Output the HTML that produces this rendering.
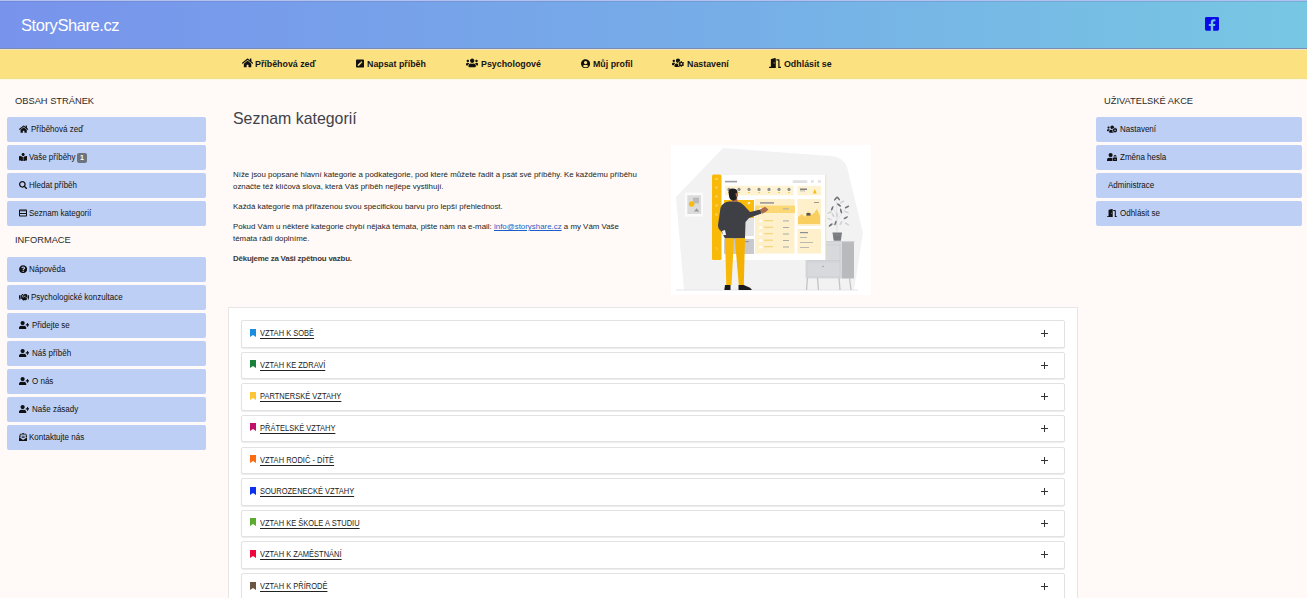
<!DOCTYPE html>
<html lang="cs">
<head>
<meta charset="utf-8">
<title>StoryShare.cz</title>
<style>
*{box-sizing:border-box;margin:0;padding:0}
html,body{width:1307px;height:598px;overflow:hidden}
body{background:#fffaf7;font-family:"Liberation Sans",sans-serif;color:#212529;position:relative}
.a{position:absolute;white-space:nowrap}
.abs{position:absolute}
.ic{position:absolute;display:block}
.nt{position:absolute;font-size:9.9px;font-weight:700;color:#151515;white-space:nowrap;line-height:12px;transform:scaleX(.895);transform-origin:0 0}
.sh{position:absolute;font-size:9.8px;color:#2a2a2a;white-space:nowrap;line-height:12px;transform:scaleX(.949);transform-origin:0 0}
.btn{position:absolute;height:25px;background:#bdcff5;border-radius:2px}
.bt{position:absolute;font-size:8.3px;line-height:11px;color:#111;white-space:nowrap;transform:scaleX(.964);transform-origin:0 0}
.badge{position:absolute;background:#6c757d;color:#fff;font-size:7px;font-weight:700;width:10px;height:10px;line-height:10px;text-align:center;border-radius:2px}
.p{position:absolute;left:233px;font-size:7.9px;line-height:12px;color:#222;white-space:nowrap}
.it{position:absolute;left:241px;width:824px;height:27.6px;background:#fff;border:1px solid #e2e2e2;border-radius:2px;box-shadow:0 1px 1px rgba(0,0,0,.08)}
.ct{position:absolute;font-size:8.3px;line-height:10px;color:#222;text-decoration:underline;text-underline-offset:1.6px;white-space:nowrap;transform:scaleX(.905);transform-origin:0 0}
.pl{position:absolute;width:7px;height:7px}
.pl:before{content:"";position:absolute;left:0;top:3px;width:7px;height:1px;background:#333}
.pl:after{content:"";position:absolute;left:3px;top:0;width:1px;height:7px;background:#333}
</style>
</head>
<body>
<div class="a" style="left:0;top:0;width:1307px;height:48px;background:linear-gradient(90deg,#7893ec 0%,#76abe8 50%,#77c7e3 100%)"></div>
<div class="a" style="left:0;top:0px;width:1307px;height:1px;background:#b2c1ef"></div>
<div class="a" style="left:0;top:1px;width:1307px;height:1px;background:rgba(100,110,170,.25)"></div>
<div class="a" style="left:0;top:48px;width:1307px;height:1px;background:#7c8ab2"></div>
<div class="a" style="left:0;top:49px;width:1307px;height:1px;background:#f0e8c3"></div>
<div class="a" style="left:0;top:78px;width:1307px;height:1px;background:#f2dc8e"></div>
<div class="a" style="left:0;top:79px;width:1307px;height:1px;background:#fffbe3"></div>
<div class="a" style="left:0;top:50px;width:1307px;height:28px;background:#fce181"></div>
<div class="a" style="left:21px;top:16px;font-size:16.5px;line-height:19px;color:#fff;letter-spacing:-0.42px">StoryShare.cz</div>
<svg class="ic" style="left:1205px;top:17px" width="14" height="13.8" viewBox="0 32 448 448" preserveAspectRatio="none"><path d="M400 32H48A48 48 0 0 0 0 80v352a48 48 0 0 0 48 48h137.25V327.69h-63V256h63v-54.64c0-62.15 37-96.48 93.67-96.48 27.14 0 55.52 4.84 55.52 4.84v61h-31.27c-30.81 0-40.42 19.12-40.42 38.73V256h68.78l-11 71.69h-57.78V480H400a48 48 0 0 0 48-48V80a48 48 0 0 0-48-48z" fill="#0a0ae8"/></svg>
<svg class="ic" style="left:242px;top:57.9px" width="11.14" height="9.90" viewBox="0 0 576 512" preserveAspectRatio="none"><path d="M280.37 148.26L96 300.11V464a16 16 0 0 0 16 16l112.06-.29a16 16 0 0 0 15.92-16V368a16 16 0 0 1 16-16h64a16 16 0 0 1 16 16v95.64a16 16 0 0 0 16 16.05L464 480a16 16 0 0 0 16-16V300L295.67 148.26a12.19 12.19 0 0 0-15.3 0zM571.6 251.47L488 182.56V44.05a12 12 0 0 0-12-12h-56a12 12 0 0 0-12 12v72.610L318.47 43a48 48 0 0 0-61 0L4.34 251.47a12 12 0 0 0-1.6 16.9l25.5 31A12 12 0 0 0 45.150 301l235.22-193.74a12.19 12.19 0 0 1 15.3 0L530.9 301a12 12 0 0 0 16.9-1.6l25.5-31a12 12 0 0 0-1.7-16.93z" fill="#111"/></svg>
<div class="nt" style="left:254.5px;top:58px">Příběhová zeď</div>
<svg class="ic" style="left:356px;top:58.7px" width="8.05" height="9.20" viewBox="0 0 448 512" preserveAspectRatio="none"><path d="M400 480H48c-26.5 0-48-21.5-48-48V80c0-26.5 21.5-48 48-48h352c26.5 0 48 21.5 48 48v352c0 26.5-21.5 48-48 48zM238.1 177.9L102.4 313.6l-6.3 57.1c-.8 7.6 5.6 14.1 13.3 13.3l57.1-6.3L302.2 242c2.3-2.3 2.3-6.1 0-8.5L246.7 178c-2.5-2.4-6.3-2.4-8.6-.1zM345 165.1L314.9 135c-9.4-9.4-24.6-9.4-33.9 0l-23.1 23.1c-2.3 2.3-2.3 6.1 0 8.5l55.5 55.5c2.3 2.3 6.1 2.3 8.5 0L345 199c9.3-9.3 9.3-24.5 0-33.9z" fill="#111"/></svg>
<div class="nt" style="left:366.5px;top:58px">Napsat příběh</div>
<svg class="ic" style="left:466px;top:57.9px" width="12.38" height="9.90" viewBox="0 0 640 512" preserveAspectRatio="none"><path d="M96 224c35.3 0 64-28.7 64-64s-28.7-64-64-64-64 28.7-64 64 28.7 64 64 64zm448 0c35.3 0 64-28.7 64-64s-28.7-64-64-64-64 28.7-64 64 28.7 64 64 64zm32 32h-64c-17.6 0-33.5 7.1-45.1 18.6 40.3 22.1 68.9 62 75.1 109.4h66c17.7 0 32-14.3 32-32v-32c0-35.3-28.7-64-64-64zm-256 0c61.9 0 112-50.1 112-112S381.9 32 320 32 208 82.1 208 144s50.1 112 112 112zm76.8 32h-8.3c-20.8 10-43.9 16-68.5 16s-47.6-6-68.5-16h-8.3C179.6 288 128 339.6 128 403.2V432c0 26.5 21.5 48 48 48h288c26.5 0 48-21.5 48-48v-28.8c0-63.6-51.6-115.2-115.2-115.2zm-223.7-13.4C161.5 263.1 145.6 256 128 256H64c-35.3 0-64 28.7-64 64v32c0 17.7 14.3 32 32 32h65.9c6.3-47.4 34.9-87.3 75.2-109.4z" fill="#111"/></svg>
<div class="nt" style="left:480.5px;top:58px">Psychologové</div>
<svg class="ic" style="left:580.6px;top:58.5px" width="9.20" height="9.50" viewBox="0 0 496 512" preserveAspectRatio="none"><path d="M248 8C111 8 0 119 0 256s111 248 248 248 248-111 248-248S385 8 248 8zm0 96c48.6 0 88 39.4 88 88s-39.4 88-88 88-88-39.4-88-88 39.4-88 88-88zm0 344c-58.7 0-111.3-26.6-146.5-68.2 18.8-35.4 55.6-59.8 98.5-59.8 2.4 0 4.8.4 7.1 1.1 13 4.2 26.6 6.9 40.9 6.9 14.3 0 28-2.7 40.9-6.9 2.3-.7 4.7-1.1 7.1-1.1 42.9 0 79.7 24.4 98.5 59.8C359.3 421.4 306.7 448 248 448z" fill="#111"/></svg>
<div class="nt" style="left:592.5px;top:58px">Můj profil</div>
<svg class="ic" style="left:672px;top:58.2px" width="12.00" height="9.60" viewBox="0 0 640 512" preserveAspectRatio="none"><path d="M610.5 341.3c2.6-14.1 2.6-28.5 0-42.6l25.8-14.9c3-1.7 4.3-5.2 3.3-8.5-6.7-21.6-18.2-41.2-33.2-57.4-2.3-2.5-6-3.1-9-1.4l-25.8 14.9c-10.9-9.3-23.4-16.5-36.9-21.3v-29.8c0-3.4-2.4-6.4-5.7-7.1-22.3-5-45-4.8-66.2 0-3.3.7-5.7 3.7-5.7 7.1v29.8c-13.5 4.8-26 12-36.9 21.3l-25.8-14.9c-2.9-1.7-6.7-1.1-9 1.4-15 16.2-26.5 35.8-33.2 57.4-1 3.3.4 6.8 3.3 8.5l25.8 14.9c-2.6 14.1-2.6 28.5 0 42.6l-25.8 14.9c-3 1.7-4.3 5.2-3.3 8.5 6.7 21.6 18.2 41.1 33.2 57.4 2.3 2.5 6 3.1 9 1.4l25.8-14.9c10.9 9.3 23.4 16.5 36.9 21.3v29.8c0 3.4 2.4 6.4 5.7 7.1 22.3 5 45 4.8 66.2 0 3.3-.7 5.7-3.7 5.7-7.1v-29.8c13.5-4.8 26-12 36.9-21.3l25.8 14.9c2.9 1.7 6.7 1.1 9-1.4 15-16.2 26.5-35.8 33.2-57.4 1-3.3-.4-6.8-3.3-8.5l-25.8-14.9zM496 368.5c-26.8 0-48.5-21.8-48.5-48.5s21.8-48.5 48.5-48.5 48.5 21.8 48.5 48.5-21.7 48.5-48.5 48.5zM96 224c35.3 0 64-28.7 64-64s-28.7-64-64-64-64 28.7-64 64 28.7 64 64 64zm224 32c1.9 0 3.7-.5 5.6-.6 8.3-21.7 20.5-42.1 36.3-59.2 7.4-8 17.9-12.6 28.9-12.6 6.9 0 13.7 1.8 19.6 5.3l7.9 4.6c.8-.5 1.6-.9 2.4-1.4 7-14.6 11.2-30.8 11.2-48 0-61.9-50.1-112-112-112S208 82.1 208 144c0 61.9 50.1 112 112 112zm105.2 194.5c-2.3-1.2-4.6-2.6-6.8-3.9-8.2 4.8-15.3 9.8-27.5 9.8-10.9 0-21.4-4.6-28.9-12.6-18.3-19.8-32.3-43.9-40.2-69.6-10.7-34.5 24.9-49.7 25.8-50.3-.1-2.6-.1-5.2 0-7.8l-7.9-4.6c-3.8-2.2-7-5-9.8-8.1-3.3.2-6.5.6-9.8.6-24.6 0-47.6-6-68.5-16h-8.3C179.6 288 128 339.6 128 403.2V432c0 26.5 21.5 48 48 48h255.4c-3.7-6-6.2-12.8-6.2-20.3v-9.2zM173.1 274.6C161.5 263.1 145.6 256 128 256H64c-35.3 0-64 28.7-64 64v32c0 17.7 14.3 32 32 32h65.9c6.3-47.4 34.9-87.3 75.2-109.4z" fill="#111"/></svg>
<div class="nt" style="left:686.8px;top:58px">Nastavení</div>
<svg class="ic" style="left:769px;top:58px" width="12.38" height="9.90" viewBox="0 0 640 512" preserveAspectRatio="none"><path d="M624 448h-80V113.45C544 86.19 522.47 64 496 64H384v64h96v384h144c8.84 0 16-7.16 16-16v-32c0-8.84-7.16-16-16-16zM312.24 1.01l-192 49.74C105.99 54.440 96 67.7 96 82.92V448H16c-8.84 0-16 7.16-16 16v32c0 8.84 7.16 16 16 16h336V33.18c0-21.58-19.56-37.41-39.76-32.17zM264 288c-13.25 0-24-14.33-24-32s10.75-32 24-32 24 14.33 24 32-10.75 32-24 32z" fill="#111"/></svg>
<div class="nt" style="left:783.5px;top:58px">Odhlásit se</div>
<div class="sh" style="left:15px;top:94.5px">OBSAH STRÁNEK</div>
<div class="sh" style="left:15px;top:234px">INFORMACE</div>
<div class="sh" style="left:1104px;top:94.5px">UŽIVATELSKÉ AKCE</div>
<div class="btn" style="left:7px;top:117px;width:199px"></div>
<svg class="ic" style="left:19px;top:124.8px" width="9.34" height="8.30" viewBox="0 0 576 512" preserveAspectRatio="none"><path d="M280.37 148.26L96 300.11V464a16 16 0 0 0 16 16l112.06-.29a16 16 0 0 0 15.92-16V368a16 16 0 0 1 16-16h64a16 16 0 0 1 16 16v95.64a16 16 0 0 0 16 16.05L464 480a16 16 0 0 0 16-16V300L295.67 148.26a12.19 12.19 0 0 0-15.3 0zM571.6 251.47L488 182.56V44.05a12 12 0 0 0-12-12h-56a12 12 0 0 0-12 12v72.610L318.47 43a48 48 0 0 0-61 0L4.34 251.47a12 12 0 0 0-1.6 16.9l25.5 31A12 12 0 0 0 45.150 301l235.22-193.74a12.19 12.19 0 0 1 15.3 0L530.9 301a12 12 0 0 0 16.9-1.6l25.5-31a12 12 0 0 0-1.7-16.93z" fill="#111"/></svg>
<div class="bt" style="left:30.7px;top:124px">Příběhová zeď</div>
<div class="btn" style="left:7px;top:145px;width:199px"></div>
<svg class="ic" style="left:19px;top:152.6px" width="8.30" height="8.30" viewBox="0 0 512 512" preserveAspectRatio="none"><path d="M352 96c0-53.02-42.98-96-96-96s-96 42.98-96 96 42.98 96 96 96 96-42.98 96-96zM233.59 241.1c-59.33-36.32-155.43-46.3-203.79-49.05C13.55 191.13 0 203.51 0 219.14v222.8c0 14.33 11.59 26.28 26.49 27.05 43.66 2.29 131.99 10.68 193.04 41.43 9.37 4.72 20.48-1.71 20.48-11.87V252.56c-.01-4.67-2.32-8.95-6.42-11.46zm248.61-49.05c-48.35 2.74-144.46 12.73-203.78 49.05-4.1 2.51-6.41 6.96-6.41 11.63v245.79c0 10.19 11.14 16.63 20.54 11.9 61.04-30.72 149.32-39.11 192.97-41.4 14.9-.78 26.49-12.73 26.49-27.06V219.14c-.01-15.63-13.56-28.01-29.81-27.09z" fill="#111"/></svg>
<div class="bt" style="left:29px;top:152px">Vaše příběhy</div>
<div class="btn" style="left:7px;top:173px;width:199px"></div>
<svg class="ic" style="left:19px;top:181.2px" width="8.30" height="8.30" viewBox="0 0 512 512" preserveAspectRatio="none"><path d="M505 442.7L405.3 343c-4.5-4.5-10.6-7-17-7H372c27.6-35.3 44-79.7 44-128C416 93.1 322.9 0 208 0S0 93.1 0 208s93.1 208 208 208c48.3 0 92.7-16.4 128-44v16.3c0 6.4 2.5 12.5 7 17l99.7 99.7c9.4 9.4 24.6 9.4 33.9 0l28.3-28.3c9.4-9.4 9.4-24.6.1-34zM208 336c-70.7 0-128-57.2-128-128 0-70.7 57.2-128 128-128 70.7 0 128 57.2 128 128 0 70.7-57.2 128-128 128z" fill="#111"/></svg>
<div class="bt" style="left:29.3px;top:180px">Hledat příběh</div>
<div class="btn" style="left:7px;top:201px;width:199px"></div>
<svg class="ic" style="left:19px;top:209px" width="8.00" height="8.00" viewBox="0 0 512 512" preserveAspectRatio="none"><path d="M464 32H48C21.5 32 0 53.5 0 80v352c0 26.5 21.5 48 48 48h416c26.5 0 48-21.5 48-48V80c0-26.5-21.5-48-48-48zm-16 144v80H64v-80h384zM64 416v-96h384v96H64z M64 112h384v48H64z" fill="#111"/></svg>
<div class="bt" style="left:29px;top:208px">Seznam kategorií</div>
<div class="btn" style="left:7px;top:257px;width:199px"></div>
<svg class="ic" style="left:18.7px;top:264.8px" width="8.30" height="8.30" viewBox="0 0 512 512" preserveAspectRatio="none"><path d="M504 256c0 136.997-111.043 248-248 248S8 392.997 8 256C8 119.083 119.043 8 256 8s248 111.083 248 248zM262.655 90c-54.497 0-89.255 22.957-116.549 63.758-3.536 5.286-2.353 12.415 2.715 16.258l34.699 26.31c5.205 3.947 12.621 3.008 16.665-2.122 17.864-22.658 30.113-35.797 57.303-35.797 20.429 0 45.698 13.148 45.698 32.958 0 14.976-12.363 22.667-32.534 33.976C247.128 238.528 216 254.941 216 296v4c0 6.627 5.373 12 12 12h56c6.627 0 12-5.373 12-12v-1.333c0-28.462 83.186-29.647 83.186-106.667 0-58.002-60.165-102-116.531-102zM256 338c-25.365 0-46 20.635-46 46 0 25.364 20.635 46 46 46s46-20.636 46-46c0-25.365-20.635-46-46-46z" fill="#111"/></svg>
<div class="bt" style="left:29.4px;top:264px">Nápověda</div>
<div class="btn" style="left:7px;top:285px;width:199px"></div>
<svg class="ic" style="left:18.7px;top:293.2px" width="10.62" height="8.50" viewBox="0 0 640 512" preserveAspectRatio="none"><path d="M434.7 64h-85.9c-8 0-15.7 3-21.6 8.4l-98.3 90c-.1.1-.2.3-.3.4-16.6 15.6-16.3 40.5-2.1 56 12.7 13.9 39.4 17.6 56.1 2.7.1-.1.3-.1.4-.2l79.9-73.2c6.5-5.9 16.7-5.5 22.6 1 6 6.5 5.5 16.6-1 22.6l-26.1 23.9L504 313.8c2.9 2.4 5.5 5 7.9 7.7V128l-54.6-54.6c-5.9-6-14.1-9.4-22.6-9.4zM544 128.2v223.9c0 17.7 14.3 32 32 32h64V128.2h-96zm48 223.9c-8.8 0-16-7.2-16-16s7.2-16 16-16 16 7.2 16 16-7.2 16-16 16zM0 384h64c17.7 0 32-14.3 32-32V128.2H0V384zm48-63.9c8.8 0 16 7.2 16 16s-7.2 16-16 16-16-7.2-16-16c0-8.9 7.2-16 16-16zm435.9 18.6L334.6 217.5l-30 27.5c-29.7 27.1-75.2 24.5-101.7-4.4-26.9-29.4-24.8-74.9 4.4-101.7L289.1 64h-83.8c-8.5 0-16.6 3.4-22.6 9.4L128 128v223.9h18.3l90.5 81.9c27.4 22.3 67.7 18.1 90-9.3l.2-.2 17.9 15.5c15.9 13 39.4 10.5 52.3-5.4l31.4-38.6 5.4 4.4c13.7 11.1 33.9 9.1 45-4.7l9.5-11.7c11.2-13.8 9.1-33.9-4.6-45.1z" fill="#111"/></svg>
<div class="bt" style="left:31.1px;top:292px">Psychologické konzultace</div>
<div class="btn" style="left:7px;top:313px;width:199px"></div>
<svg class="ic" style="left:18.7px;top:320.8px" width="10.38" height="8.30" viewBox="0 0 640 512" preserveAspectRatio="none"><path d="M624 208h-64v-64c0-8.8-7.2-16-16-16h-32c-8.8 0-16 7.2-16 16v64h-64c-8.8 0-16 7.2-16 16v32c0 8.8 7.2 16 16 16h64v64c0 8.8 7.2 16 16 16h32c8.8 0 16-7.2 16-16v-64h64c8.8 0 16-7.2 16-16v-32c0-8.8-7.2-16-16-16zm-400 48c70.7 0 128-57.3 128-128S294.7 0 224 0 96 57.3 96 128s57.3 128 128 128zm89.6 32h-16.7c-22.2 10.2-46.9 16-72.9 16s-50.6-5.8-72.9-16h-16.7C60.2 288 0 348.2 0 422.4V464c0 26.5 21.5 48 48 48h352c26.5 0 48-21.5 48-48v-41.6c0-74.2-60.2-134.4-134.4-134.4z" fill="#111"/></svg>
<div class="bt" style="left:31.5px;top:320px">Přidejte se</div>
<div class="btn" style="left:7px;top:341px;width:199px"></div>
<svg class="ic" style="left:18.7px;top:348.8px" width="10.38" height="8.30" viewBox="0 0 640 512" preserveAspectRatio="none"><path d="M624 208h-64v-64c0-8.8-7.2-16-16-16h-32c-8.8 0-16 7.2-16 16v64h-64c-8.8 0-16 7.2-16 16v32c0 8.8 7.2 16 16 16h64v64c0 8.8 7.2 16 16 16h32c8.8 0 16-7.2 16-16v-64h64c8.8 0 16-7.2 16-16v-32c0-8.8-7.2-16-16-16zm-400 48c70.7 0 128-57.3 128-128S294.7 0 224 0 96 57.3 96 128s57.3 128 128 128zm89.6 32h-16.7c-22.2 10.2-46.9 16-72.9 16s-50.6-5.8-72.9-16h-16.7C60.2 288 0 348.2 0 422.4V464c0 26.5 21.5 48 48 48h352c26.5 0 48-21.5 48-48v-41.6c0-74.2-60.2-134.4-134.4-134.4z" fill="#111"/></svg>
<div class="bt" style="left:31.5px;top:348px">Náš příběh</div>
<div class="btn" style="left:7px;top:369px;width:199px"></div>
<svg class="ic" style="left:18.7px;top:376.8px" width="10.38" height="8.30" viewBox="0 0 640 512" preserveAspectRatio="none"><path d="M624 208h-64v-64c0-8.8-7.2-16-16-16h-32c-8.8 0-16 7.2-16 16v64h-64c-8.8 0-16 7.2-16 16v32c0 8.8 7.2 16 16 16h64v64c0 8.8 7.2 16 16 16h32c8.8 0 16-7.2 16-16v-64h64c8.8 0 16-7.2 16-16v-32c0-8.8-7.2-16-16-16zm-400 48c70.7 0 128-57.3 128-128S294.7 0 224 0 96 57.3 96 128s57.3 128 128 128zm89.6 32h-16.7c-22.2 10.2-46.9 16-72.9 16s-50.6-5.8-72.9-16h-16.7C60.2 288 0 348.2 0 422.4V464c0 26.5 21.5 48 48 48h352c26.5 0 48-21.5 48-48v-41.6c0-74.2-60.2-134.4-134.4-134.4z" fill="#111"/></svg>
<div class="bt" style="left:31.5px;top:376px">O nás</div>
<div class="btn" style="left:7px;top:397px;width:199px"></div>
<svg class="ic" style="left:18.7px;top:404.8px" width="10.38" height="8.30" viewBox="0 0 640 512" preserveAspectRatio="none"><path d="M624 208h-64v-64c0-8.8-7.2-16-16-16h-32c-8.8 0-16 7.2-16 16v64h-64c-8.8 0-16 7.2-16 16v32c0 8.8 7.2 16 16 16h64v64c0 8.8 7.2 16 16 16h32c8.8 0 16-7.2 16-16v-64h64c8.8 0 16-7.2 16-16v-32c0-8.8-7.2-16-16-16zm-400 48c70.7 0 128-57.3 128-128S294.7 0 224 0 96 57.3 96 128s57.3 128 128 128zm89.6 32h-16.7c-22.2 10.2-46.9 16-72.9 16s-50.6-5.8-72.9-16h-16.7C60.2 288 0 348.2 0 422.4V464c0 26.5 21.5 48 48 48h352c26.5 0 48-21.5 48-48v-41.6c0-74.2-60.2-134.4-134.4-134.4z" fill="#111"/></svg>
<div class="bt" style="left:31.5px;top:404px">Naše zásady</div>
<div class="btn" style="left:7px;top:425px;width:199px"></div>
<svg class="ic" style="left:19px;top:432.8px" width="8.30" height="8.30" viewBox="0 0 512 512" preserveAspectRatio="none"><path d="M176 216h160c8.84 0 16-7.16 16-16v-16c0-8.84-7.16-16-16-16H176c-8.84 0-16 7.16-16 16v16c0 8.84 7.16 16 16 16zm-16 80c0 8.84 7.16 16 16 16h160c8.84 0 16-7.16 16-16v-16c0-8.84-7.16-16-16-16H176c-8.84 0-16 7.16-16 16v16zm96 121.13c-16.42 0-32.84-5.06-46.86-15.19L0 250.86V464c0 26.51 21.49 48 48 48h416c26.51 0 48-21.49 48-48V250.86L302.86 401.94c-14.02 10.12-30.44 15.19-46.86 15.19zm237.61-254.18c-8.85-6.94-17.240-13.47-29.61-22.81V96c0-26.51-21.49-48-48-48h-77.55c-3.04-2.2-5.87-4.26-9.04-6.56C312.6 29.17 279.2-.35 256 0c-23.2-.35-56.59 29.17-73.41 41.44-3.17 2.3-6 4.36-9.04 6.56H96c-26.51 0-48 21.49-48 48v44.14c-12.37 9.33-20.76 15.87-29.61 22.81A47.995 47.995 0 0 0 0 200.72v10.65l96 69.35V96h320v184.72l96-69.35v-10.65c0-14.74-6.78-28.67-18.39-37.770z" fill="#111"/></svg>
<div class="bt" style="left:28.9px;top:432px">Kontaktujte nás</div>
<div class="badge" style="left:77px;top:153px">1</div>
<div class="btn" style="left:1096px;top:117px;width:206px"></div>
<svg class="ic" style="left:1107px;top:124.8px" width="10.38" height="8.30" viewBox="0 0 640 512" preserveAspectRatio="none"><path d="M610.5 341.3c2.6-14.1 2.6-28.5 0-42.6l25.8-14.9c3-1.7 4.3-5.2 3.3-8.5-6.7-21.6-18.2-41.2-33.2-57.4-2.3-2.5-6-3.1-9-1.4l-25.8 14.9c-10.9-9.3-23.4-16.5-36.9-21.3v-29.8c0-3.4-2.4-6.4-5.7-7.1-22.3-5-45-4.8-66.2 0-3.3.7-5.7 3.7-5.7 7.1v29.8c-13.5 4.8-26 12-36.9 21.3l-25.8-14.9c-2.9-1.7-6.7-1.1-9 1.4-15 16.2-26.5 35.8-33.2 57.4-1 3.3.4 6.8 3.3 8.5l25.8 14.9c-2.6 14.1-2.6 28.5 0 42.6l-25.8 14.9c-3 1.7-4.3 5.2-3.3 8.5 6.7 21.6 18.2 41.1 33.2 57.4 2.3 2.5 6 3.1 9 1.4l25.8-14.9c10.9 9.3 23.4 16.5 36.9 21.3v29.8c0 3.4 2.4 6.4 5.7 7.1 22.3 5 45 4.8 66.2 0 3.3-.7 5.7-3.7 5.7-7.1v-29.8c13.5-4.8 26-12 36.9-21.3l25.8 14.9c2.9 1.7 6.7 1.1 9-1.4 15-16.2 26.5-35.8 33.2-57.4 1-3.3-.4-6.8-3.3-8.5l-25.8-14.9zM496 368.5c-26.8 0-48.5-21.8-48.5-48.5s21.8-48.5 48.5-48.5 48.5 21.8 48.5 48.5-21.7 48.5-48.5 48.5zM96 224c35.3 0 64-28.7 64-64s-28.7-64-64-64-64 28.7-64 64 28.7 64 64 64zm224 32c1.9 0 3.7-.5 5.6-.6 8.3-21.7 20.5-42.1 36.3-59.2 7.4-8 17.9-12.6 28.9-12.6 6.9 0 13.7 1.8 19.6 5.3l7.9 4.6c.8-.5 1.6-.9 2.4-1.4 7-14.6 11.2-30.8 11.2-48 0-61.9-50.1-112-112-112S208 82.1 208 144c0 61.9 50.1 112 112 112zm105.2 194.5c-2.3-1.2-4.6-2.6-6.8-3.9-8.2 4.8-15.3 9.8-27.5 9.8-10.9 0-21.4-4.6-28.9-12.6-18.3-19.8-32.3-43.9-40.2-69.6-10.7-34.5 24.9-49.7 25.8-50.3-.1-2.6-.1-5.2 0-7.8l-7.9-4.6c-3.8-2.2-7-5-9.8-8.1-3.3.2-6.5.6-9.8.6-24.6 0-47.6-6-68.5-16h-8.3C179.6 288 128 339.6 128 403.2V432c0 26.5 21.5 48 48 48h255.4c-3.7-6-6.2-12.8-6.2-20.3v-9.2zM173.1 274.6C161.5 263.1 145.6 256 128 256H64c-35.3 0-64 28.7-64 64v32c0 17.7 14.3 32 32 32h65.9c6.3-47.4 34.9-87.3 75.2-109.4z" fill="#111"/></svg>
<div class="bt" style="left:1119.8px;top:124px">Nastavení</div>
<div class="btn" style="left:1096px;top:145px;width:206px"></div>
<svg class="ic" style="left:1107px;top:152.8px" width="10.38" height="8.30" viewBox="0 0 640 512" preserveAspectRatio="none"><path d="M224 256A128 128 0 1 0 96 128a128 128 0 0 0 128 128zm96 64a63.08 63.08 0 0 1 8.1-30.5c-4.8-.5-9.5-1.5-14.5-1.5h-16.7a174.08 174.08 0 0 1-145.8 0h-16.7A134.43 134.43 0 0 0 0 422.4V464a48 48 0 0 0 48 48h280.9a63.54 63.54 0 0 1-8.9-32zm288-32h-32v-80a80 80 0 0 0-160 0v80h-32a32 32 0 0 0-32 32v160a32 32 0 0 0 32 32h224a32 32 0 0 0 32-32V320a32 32 0 0 0-32-32zM496 432a32 32 0 1 1 32-32 32 32 0 0 1-32 32zm32-144h-64v-80a32 32 0 0 1 64 0z" fill="#111"/></svg>
<div class="bt" style="left:1119.8px;top:152px">Změna hesla</div>
<div class="btn" style="left:1096px;top:173px;width:206px"></div>
<div class="bt" style="left:1107.7px;top:180px">Administrace</div>
<div class="btn" style="left:1096px;top:201px;width:206px"></div>
<svg class="ic" style="left:1107px;top:208.8px" width="10.38" height="8.30" viewBox="0 0 640 512" preserveAspectRatio="none"><path d="M624 448h-80V113.45C544 86.19 522.47 64 496 64H384v64h96v384h144c8.84 0 16-7.16 16-16v-32c0-8.84-7.16-16-16-16zM312.24 1.01l-192 49.74C105.99 54.440 96 67.7 96 82.92V448H16c-8.84 0-16 7.16-16 16v32c0 8.84 7.16 16 16 16h336V33.18c0-21.58-19.56-37.41-39.76-32.17zM264 288c-13.25 0-24-14.33-24-32s10.75-32 24-32 24 14.33 24 32-10.75 32-24 32z" fill="#111"/></svg>
<div class="bt" style="left:1119.8px;top:208px">Odhlásit se</div>
<div class="a" style="left:233px;top:110px;font-size:15.9px;line-height:18px;color:#414149">Seznam kategorií</div>
<div class="p" style="top:169px">Níže jsou popsané hlavní kategorie a podkategorie, pod které můžete řadit a psát své příběhy. Ke každému příběhu<br>označte též klíčová slova, která Váš příběh nejlépe vystihují.</div>
<div class="p" style="top:201px">Každá kategorie má přiřazenou svou specifickou barvu pro lepší přehlednost.</div>
<div class="p" style="top:221px">Pokud Vám u některé kategorie chybí nějaká témata, pište nám na e-mail: <span style="color:#1a5fc9;text-decoration:underline">info@storyshare.cz</span> a my Vám Vaše<br>témata rádi doplníme.</div>
<div class="p" style="top:253px;font-weight:700;letter-spacing:-0.2px;color:#3a3a3a">Děkujeme za Vaši zpětnou vazbu.</div>
<svg class="abs" style="left:671px;top:145px" width="200" height="150" viewBox="0 0 200 150">
<rect width="200" height="150" fill="#fff"/>
<path d="M52 3 L160 11 Q172 12 176 22 L192 88 L183 145 L13 145 L7 75 L5 52 Z" fill="#f2f2f3"/>
<rect x="5" y="144.5" width="182" height="1" fill="#e6e6e6"/>
<!-- frame -->
<rect x="13.8" y="47.7" width="18.2" height="23.8" fill="#fbfbfb"/>
<rect x="16.3" y="50.2" width="13.8" height="18.8" fill="#dcdcdc"/>
<rect x="22" y="52.7" width="6" height="5.6" fill="#b9b9b9"/>
<circle cx="20.7" cy="59" r="2.8" fill="#f7bb10"/>
<path d="M23 66.5 L25.6 63.2 L28.2 66.5Z" fill="#9a9a9a"/>
<!-- cabinet -->
<rect x="134.5" y="97" width="37" height="36.5" fill="#d8d9dc"/>
<rect x="171" y="96.5" width="12" height="37" fill="#b9babe"/>
<rect x="134.5" y="96" width="49" height="1.2" fill="#cfd0d3"/>
<rect x="136" y="100" width="33" height="15.5" fill="none" stroke="#c8c9cc" stroke-width="0.6"/>
<rect x="136" y="117" width="33" height="15" fill="none" stroke="#c8c9cc" stroke-width="0.6"/>
<circle cx="152" cy="121.5" r="0.8" fill="#999"/>
<g stroke="#c3c4c7" stroke-width="1.3"><path d="M136.5 133 L135.5 145"/><path d="M146.5 133 L147.5 145"/><path d="M168 133 L169 145"/><path d="M178.5 133 L180 145"/></g>
<!-- board -->
<rect x="50" y="30" width="105" height="85" fill="#fff"/>
<rect x="154" y="30" width="1.2" height="85" fill="#fbe7ad"/>
<rect x="41" y="29.5" width="9.5" height="85.5" rx="1.5" fill="#f9b908"/>
<rect x="44" y="33.5" width="3" height="1" fill="#fde9a8"/>
<rect x="44.5" y="41.5" width="2" height="2" fill="#fcd670"/>
<rect x="44.5" y="50.5" width="2" height="2" fill="#fcd670"/>
<rect x="44.5" y="59.5" width="2" height="2" fill="#fcd670"/>
<rect x="44.5" y="68.5" width="2" height="2" fill="#fcd670"/>
<path d="M44.5 102 L46 103.5 L44.5 105" stroke="#fcd670" stroke-width=".8" fill="none"/>
<rect x="54" y="35.8" width="12" height="1.6" fill="#9b9ea4"/>
<rect x="121.5" y="35.2" width="15" height="2.8" rx="1.4" fill="#dfe0e3"/>
<rect x="140" y="35" width="2.8" height="2.8" fill="#e3e3e6"/>
<rect x="147" y="35" width="2.8" height="2.8" fill="#e3e3e6"/>
<rect x="54" y="40.8" width="68.5" height="9.5" fill="#fdf2d2"/>
<g fill="#8b8d92"><circle cx="58" cy="44.4" r="1.6"/><circle cx="68" cy="44.4" r="1.6"/><circle cx="78" cy="44.4" r="1.6"/><circle cx="88" cy="44.4" r="1.6"/><circle cx="98" cy="44.4" r="1.6"/><circle cx="108" cy="44.4" r="1.6"/><circle cx="118" cy="44.4" r="1.6"/></g>
<g fill="#f5c94a"><rect x="57" y="47.2" width="2" height="0.8"/><rect x="67" y="47.2" width="2" height="0.8"/><rect x="77" y="47.2" width="2" height="0.8"/><rect x="87" y="47.2" width="2" height="0.8"/><rect x="97" y="47.2" width="2" height="0.8"/><rect x="107" y="47.2" width="2" height="0.8"/><rect x="117" y="47.2" width="2" height="0.8"/></g>
<rect x="126.5" y="40.8" width="23.5" height="9.5" fill="#fdf2d2"/>
<rect x="129" y="43.5" width="7" height="1.4" fill="#777"/>
<rect x="129" y="45.5" width="5" height="0.8" fill="#aaa"/>
<path d="M142 48.5 L143.8 44 L145.6 48.5Z" fill="#f7bb10"/>
<!-- left cards -->
<rect x="53" y="55" width="30" height="18" fill="#f9bb0c"/>
<circle cx="78" cy="58" r="1.3" fill="#fff3c4"/>
<rect x="53" y="73" width="30" height="18" fill="#e3e3e6"/>
<rect x="53" y="94" width="30" height="15" fill="#c9c9cd"/>
<rect x="74" y="96" width="4" height="1.2" fill="#999"/>
<!-- middle list -->
<rect x="84" y="54" width="39.5" height="54.5" fill="#fdf0cb"/>
<rect x="89" y="57.2" width="14" height="1.4" fill="#8b8d92"/>
<rect x="84" y="60.6" width="40" height="7.4" fill="#fcd874"/>
<g fill="#fff"><circle cx="89.7" cy="64" r="1.6"/><circle cx="89.7" cy="76" r="1.6"/><circle cx="89.7" cy="82.5" r="1.6"/><circle cx="89.7" cy="89" r="1.6"/><circle cx="89.7" cy="95.5" r="1.6"/><circle cx="89.7" cy="102" r="1.6"/></g>
<g fill="#aaa"><rect x="112" y="63.4" width="6" height="1"/><rect x="112" y="75.4" width="6" height="1"/><rect x="112" y="82" width="6" height="1"/><rect x="112" y="88.5" width="6" height="1"/><rect x="112" y="95" width="6" height="1"/><rect x="112" y="101.5" width="6" height="1"/></g>
<g fill="#f6cf6a"><rect x="93" y="75.2" width="9" height="1"/><rect x="93" y="81.7" width="9" height="1"/><rect x="93" y="88.2" width="9" height="1"/><rect x="93" y="94.7" width="9" height="1"/><rect x="93" y="101.2" width="9" height="1"/></g>
<!-- chart panel -->
<rect x="126.5" y="54" width="23.5" height="27" fill="#fdf0cb"/>
<rect x="143" y="57" width="5" height="1" fill="#999"/>
<path d="M127 79 L127 72 L131 69 L134 72 L137 66 L140 70 L143 68 L146 64 L149 71 L149 79Z" fill="#f8cf60"/>
<rect x="135.5" y="68" width="4" height="2.6" fill="#555"/>
<rect x="126.5" y="84" width="23.5" height="24.5" fill="#fdf0cb"/>
<rect x="129" y="87" width="8" height="1.2" fill="#8b8d92"/>
<g fill="#aaa"><rect x="129" y="92" width="7" height="0.8"/><rect x="129" y="97" width="13" height="0.8"/><rect x="129" y="102" width="9" height="0.8"/></g>
<!-- plant -->
<g stroke="#d2d3d6" stroke-width=".5" fill="none"><path d="M166 87 L165.5 55"/><path d="M166 75 L175 63"/><path d="M166 80 L159 79"/><path d="M166 68 L160 63"/></g>
<ellipse cx="158.5" cy="67.5" rx="2.6" ry="0.9" transform="rotate(-30 158.5 67.5)" fill="#d0d1d4"/>
<ellipse cx="158.5" cy="74" rx="2.6" ry="0.9" transform="rotate(20 158.5 74)" fill="#d0d1d4"/>
<ellipse cx="175.5" cy="67" rx="2.6" ry="0.9" transform="rotate(20 175.5 67)" fill="#d0d1d4"/>
<ellipse cx="176" cy="79" rx="2.6" ry="0.9" transform="rotate(30 176 79)" fill="#d0d1d4"/>
<ellipse cx="170" cy="78" rx="2.6" ry="0.9" transform="rotate(-60 170 78)" fill="#d0d1d4"/>
<ellipse cx="162" cy="70" rx="2.6" ry="0.9" transform="rotate(60 162 70)" fill="#d0d1d4"/>
<ellipse cx="166" cy="70" rx="2.6" ry="0.9" transform="rotate(90 166 70)" fill="#d0d1d4"/>
<ellipse cx="171" cy="57" rx="2.6" ry="0.9" transform="rotate(-30 171 57)" fill="#d0d1d4"/>
<ellipse cx="164.6" cy="53.7" rx="2.5" ry="0.85" transform="rotate(-50 164.6 53.7)" fill="#727378"/>
<ellipse cx="167.4" cy="53.5" rx="2.5" ry="0.85" transform="rotate(50 167.4 53.5)" fill="#727378"/>
<ellipse cx="168" cy="60" rx="2.5" ry="0.85" transform="rotate(40 168 60)" fill="#727378"/>
<ellipse cx="161.2" cy="63.3" rx="2.5" ry="0.85" transform="rotate(-65 161.2 63.3)" fill="#727378"/>
<ellipse cx="176" cy="62" rx="2.5" ry="0.85" transform="rotate(-25 176 62)" fill="#727378"/>
<ellipse cx="174.8" cy="72.8" rx="2.5" ry="0.85" transform="rotate(-30 174.8 72.8)" fill="#727378"/>
<ellipse cx="159.7" cy="80" rx="2.5" ry="0.85" transform="rotate(-40 159.7 80)" fill="#727378"/>
<ellipse cx="164.5" cy="78" rx="2.5" ry="0.85" transform="rotate(-70 164.5 78)" fill="#727378"/>
<ellipse cx="170" cy="66" rx="2.5" ry="0.85" transform="rotate(75 170 66)" fill="#727378"/>
<path d="M161.5 87.5 L171 87.5 L169.8 95.7 L162.7 95.7Z" fill="#7a7b80"/>
<path d="M162 90 L170.5 90" stroke="#9a9ba0" stroke-width=".4"/>
<!-- man -->
<path d="M58 56.5 Q51 57.5 49.5 63 L47 80 Q47 84 50 86 L54 93.5 L74 93.5 L74.5 77 L78 73 L90.5 68.5 L89.5 64.5 L79 67 L73 60.5 Q70 57 66 56.5Z" fill="#3f4045"/>
<path d="M51 86 L54 85 L55 90 L52 90Z" fill="#f4f4f4"/>
<path d="M89 64.5 L94 61.8 L97.5 64.5 L95 66.8 L91 68.8Z" fill="#a86a50"/>
<path d="M61.5 51 L66 51 L66.5 57 L61 57Z" fill="#a86a50"/>
<path d="M57.5 47 Q57.5 43.5 61.5 43.5 Q66.5 43.5 66.5 47.5 L66.5 50 Q66 55.5 62 55.5 Q58.5 55 58 51Z" fill="#1f1f22"/>
<path d="M64.5 48 L67 48.5 L67 51.5 L65 52Z" fill="#a86a50"/>
<path d="M54 93.3 L63 93.3 L60.5 140 L55.3 140Z" fill="#f9b90a"/>
<path d="M63.8 93.3 L74 93.3 L72.8 140 L67.8 140Z" fill="#f4b100"/>
<path d="M54 140 L59.5 140 L59.5 145 L53.3 145Z" fill="#1b1b1d"/>
<path d="M67.5 140 L72.8 140 L79 142.8 L81 145 L67.5 145Z" fill="#1b1b1d"/>
</svg>

<div class="a" style="left:228px;top:307px;width:850px;height:300px;background:#fff;border:1px solid #e6e6e6"></div>
<div class="it" style="top:320.00px"></div>
<svg class="ic" style="left:249.5px;top:328.50px" width="6" height="8" viewBox="0 0 6 8"><path d="M0 0h6v8L3 6 0 8z" fill="#1b8de0"/></svg>
<div class="ct" style="left:259.5px;top:328.00px">VZTAH K SOBĚ</div>
<div class="pl" style="left:1041px;top:330.00px"></div>
<div class="it" style="top:351.62px"></div>
<svg class="ic" style="left:249.5px;top:360.12px" width="6" height="8" viewBox="0 0 6 8"><path d="M0 0h6v8L3 6 0 8z" fill="#19803a"/></svg>
<div class="ct" style="left:259.5px;top:359.62px">VZTAH KE ZDRAVÍ</div>
<div class="pl" style="left:1041px;top:361.62px"></div>
<div class="it" style="top:383.25px"></div>
<svg class="ic" style="left:249.5px;top:391.75px" width="6" height="8" viewBox="0 0 6 8"><path d="M0 0h6v8L3 6 0 8z" fill="#fdc534"/></svg>
<div class="ct" style="left:259.5px;top:391.25px">PARTNERSKÉ VZTAHY</div>
<div class="pl" style="left:1041px;top:393.25px"></div>
<div class="it" style="top:414.88px"></div>
<svg class="ic" style="left:249.5px;top:423.38px" width="6" height="8" viewBox="0 0 6 8"><path d="M0 0h6v8L3 6 0 8z" fill="#c1116a"/></svg>
<div class="ct" style="left:259.5px;top:422.88px">PŘÁTELSKÉ VZTAHY</div>
<div class="pl" style="left:1041px;top:424.88px"></div>
<div class="it" style="top:446.50px"></div>
<svg class="ic" style="left:249.5px;top:455.00px" width="6" height="8" viewBox="0 0 6 8"><path d="M0 0h6v8L3 6 0 8z" fill="#fb6b12"/></svg>
<div class="ct" style="left:259.5px;top:454.50px">VZTAH RODIČ - DÍTĚ</div>
<div class="pl" style="left:1041px;top:456.50px"></div>
<div class="it" style="top:478.12px"></div>
<svg class="ic" style="left:249.5px;top:486.62px" width="6" height="8" viewBox="0 0 6 8"><path d="M0 0h6v8L3 6 0 8z" fill="#0b30ee"/></svg>
<div class="ct" style="left:259.5px;top:486.12px">SOUROZENECKÉ VZTAHY</div>
<div class="pl" style="left:1041px;top:488.12px"></div>
<div class="it" style="top:509.75px"></div>
<svg class="ic" style="left:249.5px;top:518.25px" width="6" height="8" viewBox="0 0 6 8"><path d="M0 0h6v8L3 6 0 8z" fill="#5bab30"/></svg>
<div class="ct" style="left:259.5px;top:517.75px">VZTAH KE ŠKOLE A STUDIU</div>
<div class="pl" style="left:1041px;top:519.75px"></div>
<div class="it" style="top:541.38px"></div>
<svg class="ic" style="left:249.5px;top:549.88px" width="6" height="8" viewBox="0 0 6 8"><path d="M0 0h6v8L3 6 0 8z" fill="#ef063b"/></svg>
<div class="ct" style="left:259.5px;top:549.38px">VZTAH K ZAMĚSTNÁNÍ</div>
<div class="pl" style="left:1041px;top:551.38px"></div>
<div class="it" style="top:573.00px"></div>
<svg class="ic" style="left:249.5px;top:581.50px" width="6" height="8" viewBox="0 0 6 8"><path d="M0 0h6v8L3 6 0 8z" fill="#6b5541"/></svg>
<div class="ct" style="left:259.5px;top:581.00px">VZTAH K PŘÍRODĚ</div>
<div class="pl" style="left:1041px;top:583.00px"></div>
</body>
</html>
